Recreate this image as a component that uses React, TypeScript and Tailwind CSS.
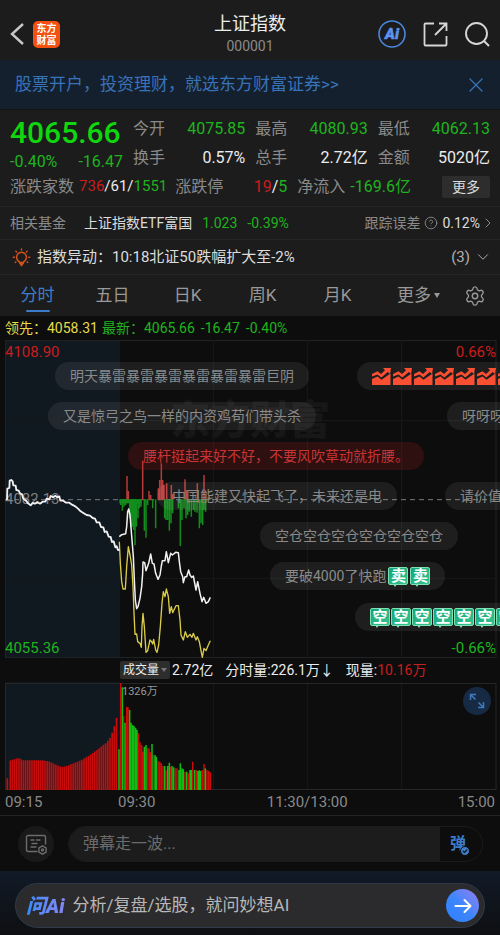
import { ChevronDown, ChevronRight, CircleHelp, Settings, X } from "lucide-react";
import clsx from "clsx";

type Point = [number, number];

const stats = [
  { label: "今开", value: "4075.85", down: true },
  { label: "最高", value: "4080.93", down: true },
  { label: "最低", value: "4062.13", down: true },
  { label: "换手", value: "0.57%", down: false },
  { label: "总手", value: "2.72亿", down: false },
  { label: "金额", value: "5020亿", down: false },
];

const periods = ["分时", "五日", "日K", "周K", "月K"];

// Chart units are a third of a pixel at the base width of 500px.
const preMarket: Point[] = [
  [21, 180], [22, 146], [28, 144], [29, 122], [34, 120], [38, 124], [40, 136], [47, 137], [49, 150], [56, 152],
  [60, 160], [66, 163], [70, 176], [78, 182], [84, 190], [92, 196], [98, 189], [105, 191], [112, 186], [120, 191],
  [128, 185], [136, 185], [140, 176], [148, 178], [152, 168], [160, 172], [166, 167], [172, 172], [178, 169],
  [181, 182], [190, 182], [198, 188], [208, 188], [216, 194], [226, 199], [234, 206], [242, 214], [250, 219],
  [260, 225], [270, 227], [278, 234], [285, 236], [290, 247], [298, 247], [303, 261], [310, 262], [314, 276],
  [320, 274], [326, 290], [332, 291], [336, 306], [341, 304], [346, 322], [350, 319], [354, 330], [358, 330],
];

const indexLine: Point[] = [
  [358, 290], [365, 284], [377, 281], [380, 260], [383, 215], [386, 207], [390, 225], [396, 300], [400, 350],
  [403, 420], [406, 480], [410, 506], [414, 500], [420, 475], [425, 440], [428, 400], [429, 366], [434, 368],
  [438, 392], [446, 370], [452, 342], [457, 370], [462, 372], [467, 400], [474, 418], [480, 405], [484, 378],
  [487, 362], [495, 362], [499, 335], [505, 368], [512, 340], [517, 345], [527, 337], [535, 338], [538, 365],
  [542, 395], [548, 410], [550, 428], [555, 410], [560, 410], [566, 390], [570, 405], [575, 412], [580, 408],
  [588, 450], [593, 425], [600, 460], [606, 485], [611, 472], [618, 490], [625, 485], [631, 472],
];

const leadLine: Point[] = [
  [358, 305], [361, 370], [365, 425], [369, 447], [376, 447], [380, 380], [385, 320], [390, 345], [395, 375],
  [399, 440], [402, 520], [405, 583], [410, 582], [413, 605], [420, 610], [424, 622], [426, 560], [429, 520],
  [433, 560], [438, 637], [443, 632], [450, 600], [455, 605], [458, 612], [461, 598], [467, 630], [471, 637],
  [476, 615], [481, 560], [486, 490], [490, 455], [495, 470], [499, 447], [505, 470], [509, 520], [514, 500],
  [518, 518], [528, 497], [535, 497], [540, 540], [543, 585], [550, 600], [556, 575], [562, 592], [570, 583],
  [576, 592], [580, 580], [588, 600], [592, 590], [598, 605], [603, 632], [607, 652], [612, 625], [618, 632],
  [625, 615], [631, 602],
];

const flowUp: Point[] = [
  [381, 108], [385, 153], [428, 62], [447, 153], [452, 165], [475, 145], [479, 120], [484, 70], [488, 120],
  [492, 135], [500, 130], [514, 135], [518, 162], [555, 118], [559, 150], [592, 130], [612, 105], [628, 165],
];

const flowDown: Point[] = [
  [362, 195], [367, 212], [372, 200], [377, 195], [389, 235], [393, 265], [397, 260], [401, 270], [405, 316],
  [409, 260], [414, 235], [418, 205], [423, 200], [433, 272], [438, 293], [443, 195], [458, 205], [467, 265],
  [494, 235], [498, 240], [503, 240], [508, 272], [513, 250], [518, 220], [535, 205], [541, 318], [546, 240],
  [552, 205], [558, 235], [563, 225], [568, 215], [574, 230], [580, 210], [585, 215], [591, 218], [598, 265],
  [603, 250], [608, 255], [612, 210], [617, 215],
];

const auctionEnvelope: Point[] = [
  [28, 318], [40, 313], [55, 309], [70, 316], [130, 316], [150, 320], [165, 328], [185, 336], [200, 333],
  [220, 325], [240, 317], [260, 306], [280, 293], [300, 278], [320, 262], [330, 248], [340, 225], [348, 195],
  [356, 157],
];

const volumes: [number, number, "r" | "g"][] = [
  [357, 283, "g"], [362, 84, "r"], [367, 97, "g"], [371, 182, "r"], [375, 203, "g"], [380, 155, "r"],
  [384, 157, "r"], [389, 165, "g"], [393, 203, "g"], [398, 210, "g"], [402, 213, "g"], [407, 218, "g"],
  [411, 225, "g"], [415, 235, "r"], [420, 262, "r"], [425, 270, "r"], [429, 290, "r"], [433, 275, "g"],
  [438, 270, "g"], [442, 280, "r"], [447, 280, "r"], [451, 292, "r"], [456, 267, "g"], [460, 300, "r"],
  [465, 300, "g"], [469, 305, "g"], [474, 318, "r"], [479, 320, "r"], [484, 324, "r"], [489, 333, "r"],
  [494, 333, "g"], [498, 345, "r"], [503, 333, "g"], [508, 323, "g"], [512, 335, "r"], [516, 333, "g"],
  [521, 337, "g"], [526, 340, "r"], [531, 340, "r"], [537, 345, "g"], [541, 325, "g"], [546, 340, "g"],
  [550, 343, "g"], [555, 350, "r"], [560, 350, "g"], [565, 355, "r"], [570, 345, "g"], [574, 345, "g"],
  [578, 320, "r"], [584, 345, "g"], [589, 345, "r"], [594, 348, "g"], [598, 346, "g"], [602, 348, "g"],
  [607, 345, "r"], [612, 327, "r"], [616, 340, "g"], [621, 345, "r"], [626, 347, "r"], [631, 352, "r"],
];

const toPath = (points: Point[]) => "M" + points.map((p) => p.join(" ")).join("L");

const barsPath = (bars: Point[], base: number) =>
  bars.map(([x, y]) => `M${x} ${base}V${y}`).join("");

function envelopeAt(x: number) {
  const i = auctionEnvelope.findIndex(([px]) => px >= x);
  if (i <= 0) return auctionEnvelope[0][1];
  const [x0, y0] = auctionEnvelope[i - 1];
  const [x1, y1] = auctionEnvelope[i];
  return y0 + ((y1 - y0) * (x - x0)) / (x1 - x0);
}

const auctionBars: Point[] = [[22, 370]];
for (let x = 31; x < 356; x += 6.5) auctionBars.push([x, envelopeAt(x)]);

function BrandLogo() {
  return (
    <svg width="27" height="27" viewBox="0 0 27 27" role="img" aria-label="东方财富">
      <rect width="27" height="27" rx="5" fill="#f4500f" />
      <g
        fill="#fff"
        fontFamily="'Noto Sans CJK SC', sans-serif"
        fontSize="10"
        fontWeight="700"
        textAnchor="middle"
      >
        <text x="13.5" y="11">东方</text>
        <text x="13.5" y="23">财富</text>
      </g>
    </svg>
  );
}

function AiBadge() {
  return (
    <svg width="28" height="28" viewBox="0 0 28 28">
      <circle cx="14" cy="14" r="13" fill="none" stroke="#4a86dc" strokeWidth="1.6" />
      <text
        x="14"
        y="19"
        fill="#5b93f0"
        stroke="#5b93f0"
        strokeWidth="0.5"
        fontFamily="Roboto, sans-serif"
        fontSize="15"
        fontWeight="900"
        fontStyle="italic"
        textAnchor="middle"
      >
        Ai
      </text>
    </svg>
  );
}

function BulbIcon() {
  return (
    <svg width="19" height="19" viewBox="0 0 19 19" fill="none" stroke="#d2521c" strokeWidth="1.5" strokeLinecap="round">
      <path d="M7.3 13.6a4.9 4.9 0 1 1 4.4 0c-.3 1.2-1 2.4-2.2 3.6-1.2-1.2-1.9-2.4-2.200-3.600Z" />
      <path d="M7.6 14.4h3.800l-1.900 3Z" fill="#d2521c" />
      <path d="M9.5 1v1M3.900 3.300l.7.7M15.100 3.300l-.7.7M1.300 9.300h1M16.700 9.300h1M3.300 14.400l.5-.4M15.700 14.400l-.5-.4" />
    </svg>
  );
}

function TrendEmoji() {
  return (
    <svg width="19" height="18" viewBox="0 0 19 18" className="shrink-0" fill="#fb4f33">
      <path d="M0 7 5.500 4.200 9 7 13 3.200 11 1H19L18 7 15.800 5 9.300 10.500 5.500 7.500 0 9.500Z" />
      <path d="M0 12 5.500 9.500 9.500 12.800 18.500 6.500V18H0Z" />
    </svg>
  );
}

function WordEmoji({ word }: { word: string }) {
  return (
    <span className="relative flex h-[18px] w-5 shrink-0 items-center justify-center rounded-[2px] border border-[#7fe0b4] bg-linear-to-br from-[#12a578] to-[#35c48f] text-[15px] leading-none font-bold text-white after:absolute after:-bottom-[3px] after:left-1 after:border-x-2 after:border-t-3 after:border-x-transparent after:border-t-[#7fe0b4]">
      {word}
    </span>
  );
}

function Bullet({ className, hot, children }: { className: string; hot?: boolean; children: React.ReactNode }) {
  return (
    <div
      className={clsx(
        "absolute flex h-7 items-center rounded-full px-[15px] text-sm whitespace-nowrap",
        hot ? "bg-[#b41e1e]/20 text-[#c93434]" : "bg-white/7 text-[#8a8a8a]",
        className,
      )}
    >
      {children}
    </div>
  );
}

function Header() {
  return (
    <header className="grid h-15 grid-cols-[1fr_auto_1fr] items-center bg-[#1c1c1c] pr-2.5 pl-2.5">
      <div className="flex items-center gap-2 pt-2">
        <button type="button" aria-label="返回">
          <svg width="15" height="22" viewBox="0 0 15 22" fill="none" stroke="#c8c8c8" strokeWidth="2.4">
            <path d="M13 1 2 11l11 10" />
          </svg>
        </button>
        <BrandLogo />
      </div>
      <div className="flex flex-col items-center pt-2">
        <h1 className="text-lg leading-6 text-[#ececec]">上证指数</h1>
        <span className="text-sm leading-5 text-[#8a8a8a]">000001</span>
      </div>
      <div className="flex items-center justify-end gap-4 pt-2">
        <button type="button" aria-label="Ai">
          <AiBadge />
        </button>
        <button type="button" aria-label="分享">
          <svg width="26" height="26" viewBox="0 0 26 26" fill="none" stroke="#d6d6d6" strokeWidth="1.8">
            <path d="M12 2.500H3.500a1 1 0 0 0-1 1v20a1 1 0 0 0 1 1h20a1 1 0 0 0 1-1V15M17 2.500h7.500V10M24.500 2.500 13 14" />
          </svg>
        </button>
        <button type="button" aria-label="搜索">
          <svg width="26" height="26" viewBox="0 0 26 26" fill="none" stroke="#d6d6d6" strokeWidth="1.9">
            <circle cx="12.5" cy="12.5" r="10.5" />
            <path d="m20 20 5 5" />
          </svg>
        </button>
      </div>
    </header>
  );
}

function Quote() {
  return (
    <section className="bg-[#1c1c1c] px-2.5 pt-1 pb-[5px] text-base">
      <div className="grid grid-cols-[113px_1fr] gap-2.5">
        <div>
          <div className="text-[30px] leading-[38px] font-medium text-[#0fd60f]">4065.66</div>
          <div className="flex justify-between leading-5 text-[#1fb41f]">
            <span>-0.40%</span>
            <span>-16.47</span>
          </div>
        </div>
        <dl className="grid grid-cols-3 gap-x-2.5">
          {stats.map((s) => (
            <div key={s.label} className="flex justify-between leading-[29px]">
              <dt className="text-[#8a8a8a]">{s.label}</dt>
              <dd className={s.down ? "text-[#1fb41f]" : "text-[#ececec]"}>{s.value}</dd>
            </div>
          ))}
        </dl>
      </div>
      <div className="flex h-[29px] items-center text-[#8a8a8a]">
        <span>涨跌家数</span>
        <span className="ml-[5px] text-[15px] text-[#ececec]">
          <span className="text-[#c81e1e]">736</span>/61/<span className="text-[#1fb41f]">1551</span>
        </span>
        <div className="ml-2 flex w-28 justify-between">
          <span>涨跌停</span>
          <span className="text-[#ececec]">
            <span className="text-[#c81e1e]">19</span>/<span className="text-[#1fb41f]">5</span>
          </span>
        </div>
        <span className="ml-2.5">净流入</span>
        <span className="ml-[5px] text-[#1fb41f]">-169.6亿</span>
        <button type="button" className="ml-auto h-[22px] w-12 rounded-[2px] bg-[#2d2d2d] text-sm text-[#dcdcdc]">
          更多
        </button>
      </div>
    </section>
  );
}

function PriceChart() {
  return (
    <section className="relative h-[318px] overflow-hidden text-[15px] leading-5">
      <svg className="absolute inset-0 h-full w-full" viewBox="0 0 1500 954" preserveAspectRatio="none" fill="none">
        <rect x="15" y="0" width="345" height="954" fill="#101820" />
        <g stroke="#202224">
          <path vectorEffect="non-scaling-stroke" d="M15 1.500H1488M15 952.500H1488M16.500 0V954M1488 0V954" />
        </g>
        <g stroke="#17191b">
          <path vectorEffect="non-scaling-stroke" d="M190 0V954M640 0V954M922 0V954M1205 0V954M15 242H1488M15 715H1488" />
        </g>
      </svg>
      <div className="absolute inset-x-0 top-13 text-center text-[40px] leading-[58px] font-black text-[#171717]">
        东方财富
      </div>
      <span className="absolute top-[149px] left-[5px] text-[#808080]">4082.13</span>
      <svg className="absolute inset-0 h-full w-full" viewBox="0 0 1500 954" preserveAspectRatio="none" fill="none">
        <g transform="translate(0 300)">
          <path d="M15 179H1488" stroke="#7a7a7a" strokeDasharray="5 4" vectorEffect="non-scaling-stroke" />
          <path d={barsPath(flowUp, 180)} stroke="#b83a3a" strokeWidth="4.5" />
          <path d={barsPath(flowDown, 178)} stroke="#128c1c" strokeWidth="4.5" />
          <path d="M358 184H424" stroke="#128c1c" strokeWidth="12" />
          <path d={toPath(leadLine)} stroke="#d8cc4a" strokeWidth="4" strokeLinejoin="round" />
          <path d={toPath(preMarket)} stroke="#f2f2f2" strokeWidth="5.5" strokeLinejoin="round" />
          <path d={toPath(indexLine)} stroke="#f2f2f2" strokeWidth="4.5" strokeLinejoin="round" />
        </g>
      </svg>
      <span className="absolute top-0.5 left-[5px] text-[#c81e1e]">4108.90</span>
      <span className="absolute top-0.5 right-1 text-[#c81e1e]">0.66%</span>
      <span className="absolute bottom-0 left-[5px] text-[#1fb41f]">4055.36</span>
      <span className="absolute right-1 bottom-0 text-[#1fb41f]">-0.66%</span>

      {/* Scrolling comments */}
      <Bullet className="top-[22px] left-[55px]">明天暴雷暴雷暴雷暴雷暴雷暴雷巨阴</Bullet>
      <Bullet className="top-[22px] left-[357px] gap-0.5">
        {[0, 1, 2, 3, 4, 5, 6].map((i) => (
          <TrendEmoji key={i} />
        ))}
      </Bullet>
      <Bullet className="top-[62px] left-12">又是惊弓之鸟一样的内资鸡苟们带头杀</Bullet>
      <Bullet className="top-[62px] left-[447px]">呀呀呀</Bullet>
      <Bullet hot className="top-[102px] left-32">腰杆挺起来好不好，不要风吹草动就折腰。</Bullet>
      <Bullet className="top-[142px] left-[157px]">中国能建又快起飞了，未来还是电</Bullet>
      <Bullet className="top-[142px] left-[445px]">请价值</Bullet>
      <Bullet className="top-[182px] left-[260px]">空仓空仓空仓空仓空仓空仓</Bullet>
      <Bullet className="top-[222px] left-[270px] gap-0.5">
        要破4000了快跑
        <WordEmoji word="卖" />
        <WordEmoji word="卖" />
      </Bullet>
      <Bullet className="top-[263px] left-[355px] gap-px">
        {[0, 1, 2, 3, 4, 5, 6].map((i) => (
          <WordEmoji key={i} word="空" />
        ))}
      </Bullet>
    </section>
  );
}

function VolumeChart() {
  const red = volumes.filter((v) => v[2] === "r").map(([x, y]): Point => [x, y]);
  const green = volumes.filter((v) => v[2] === "g").map(([x, y]): Point => [x, y]);

  return (
    <section>
      <div className="flex h-6 items-center pl-[120px] text-sm text-[#ececec]">
        <button type="button" className="flex h-[18px] w-[50px] items-center justify-between rounded-[2px] bg-[#2d2d2d] px-[3px] text-xs">
          成交量
          <span className="border-x-3 border-t-4 border-x-transparent border-t-[#777]" />
        </button>
        <span className="ml-0.5">2.72亿</span>
        <span className="ml-3">分时量:226.1万↓</span>
        <span className="ml-3">
          现量:<span className="text-[#c81e1e]">10.16万</span>
        </span>
      </div>
      <div className="relative h-[108px]">
        <svg className="h-full w-full" viewBox="0 0 1500 324" preserveAspectRatio="none" fill="none">
          <rect x="15" y="0" width="345" height="324" fill="#101820" />
          <path vectorEffect="non-scaling-stroke" stroke="#17191b" d="M190 0V324M640 0V324M922 0V324M1205 0V324" />
          <path vectorEffect="non-scaling-stroke" stroke="#242628" d="M15 4.500H1488M15 322.500H1488M16.500 4V324M1488 4V324" />
          <g transform="translate(0 -81)">
            <path d={barsPath(auctionBars, 405)} stroke="#c80c0c" strokeWidth="5" />
            <path d={barsPath(red, 405)} stroke="#cc0a0a" strokeWidth="4.5" />
            <path d={barsPath(green, 405)} stroke="#12bc12" strokeWidth="4.5" />
          </g>
        </svg>
        <span className="absolute top-0.5 left-[122px] text-[11px] leading-4 text-[#999]">1326万</span>
        <button
          type="button"
          aria-label="全屏"
          className="absolute top-[5px] right-[9px] flex size-7 items-center justify-center rounded-full bg-[#172a44]"
        >
          <svg width="16" height="16" viewBox="0 0 16 16" fill="none" stroke="#3f79bd" strokeWidth="1.5">
            <path d="M1.500 7V1.500H7M1.500 1.500 6.500 6.500M14.500 9v5.500H9M14.500 14.500 9.500 9.500" />
          </svg>
        </button>
      </div>
      <div className="grid h-[25px] grid-cols-[113px_1fr_auto] items-center pr-[5px] pl-[5px] text-[15px] text-[#8a8a8a]">
        <span>09:15</span>
        <div className="flex justify-between">
          <span>09:30</span>
          <span className="mr-[110px]">11:30/13:00</span>
        </div>
        <span>15:00</span>
      </div>
    </section>
  );
}

export default function App() {
  return (
    <main className="bg-[#0d0d0d] font-[Roboto,'Noto_Sans_CJK_SC',sans-serif]">
      <Header />

      <div className="flex h-[50px] items-center justify-between border-b border-[#141414] bg-[#15202e] pr-3 pl-[15px]">
        <a href="#open" className="text-[17px] text-[#3872b8]">
          股票开户，投资理财，就选东方财富证券&gt;&gt;
        </a>
        <button type="button" aria-label="关闭">
          <X size={24} strokeWidth={1.3} className="text-[#3872b8]" />
        </button>
      </div>

      <Quote />

      <div className="flex h-[33px] items-center border-t border-[#262626] bg-[#1c1c1c] pr-2 pl-2.5 text-sm">
        <span className="text-[#8a8a8a]">相关基金</span>
        <a href="#fund" className="ml-[18px] flex gap-2.5 text-[#dcdcdc]">
          上证指数ETF富国
          <span className="text-[#1fb41f]">1.023</span>
          <span className="text-[#1fb41f]">-0.39%</span>
        </a>
        <span className="ml-auto text-[#8a8a8a]">跟踪误差</span>
        <CircleHelp size={14} strokeWidth={1.5} className="ml-1 text-[#8a8a8a]" />
        <span className="ml-1 text-[#dcdcdc]">0.12%</span>
        <ChevronRight size={16} strokeWidth={1.5} className="-mr-1 text-[#8a8a8a]" />
      </div>

      <div className="flex h-[35px] items-center border-t border-[#262626] bg-[#1c1c1c] pr-2 pl-3 text-[15px] text-[#dcdcdc]">
        <BulbIcon />
        <span className="ml-1.5">指数异动：10:18北证50跌幅扩大至-2%</span>
        <button type="button" className="ml-auto flex items-center gap-1 text-[#b0b0b0]">
          (3)
          <ChevronDown size={18} strokeWidth={1.3} />
        </button>
      </div>

      <nav className="grid h-[42px] grid-cols-[repeat(6,75fr)_50fr] border-t border-[#262626] bg-[#1c1c1c] text-[17px] text-[#999]">
        {periods.map((name, i) => (
          <button
            key={name}
            type="button"
            className={clsx("relative", i === 0 && "text-[#3d7cc9]")}
          >
            {name}
            {i === 0 && (
              <span className="absolute bottom-1 left-1/2 h-0.5 w-6 -translate-x-1/2 rounded-full bg-[#3d7cc9]" />
            )}
          </button>
        ))}
        <button type="button" className="flex items-center justify-center gap-[3px] pl-3">
          更多
          <span className="border-x-3 border-t-5 border-x-transparent border-t-[#999]" />
        </button>
        <button type="button" aria-label="设置" className="flex items-center justify-center">
          <Settings size={22} strokeWidth={1.5} />
        </button>
      </nav>

      <div className="flex h-6 items-center pl-[5px] text-sm text-[#1fb41f]">
        <span className="text-[#e6dc4b]">领先：4058.31</span>
        <span className="ml-1">最新：4065.66</span>
        <span className="ml-1.5">-16.47</span>
        <span className="ml-1.5">-0.40%</span>
      </div>

      <PriceChart />
      <VolumeChart />

      <div className="flex h-14 items-center gap-3.5 border-t border-[#222] pr-[17px] pl-[18px]">
        <button type="button" aria-label="弹幕设置" className="flex size-9 shrink-0 items-center justify-center rounded-full bg-[#191919]">
          <svg width="22" height="22" viewBox="0 0 22 22" fill="none" stroke="#6c6c6c" strokeWidth="1.4" strokeLinecap="round">
            <path d="M12 18.500H3A1.500 1.500 0 0 1 1.500 17V4A1.500 1.500 0 0 1 3 2.500h16A1.500 1.500 0 0 1 20.500 4v7M6 7h3M11.500 7H15M7 10.500h5M6 14h5" />
            <path d="m17.500 12.800 3.600 2.100v4.200l-3.600 2.100-3.600-2.100v-4.200Z" />
            <circle cx="17.5" cy="17" r="1" />
          </svg>
        </button>
        <div className="flex h-9 flex-1 overflow-hidden rounded-full border border-[#1c1c1c]">
          <input
            type="text"
            aria-label="弹幕"
            placeholder="弹幕走一波..."
            className="min-w-0 flex-1 bg-[#1c1c1c] pl-3.5 text-base outline-none placeholder:text-[#6c6c6c]"
          />
          <button type="button" aria-label="弹幕开关" className="flex w-[42px] items-center pl-2.5">
            <span className="relative text-base leading-none font-bold text-[#3d7cc9]">
              弹
              <svg className="absolute -right-1 -bottom-1" width="10" height="10" viewBox="0 0 10 10">
                <circle cx="5" cy="5" r="4.5" fill="#3d7cc9" stroke="#0d0d0d" />
                <path d="m3 5 1.500 1.500L7.200 3.700" fill="none" stroke="#0d0d0d" strokeWidth="1.2" />
              </svg>
            </span>
          </button>
        </div>
      </div>

      <div className="h-16 bg-linear-to-b from-[#111a27] to-[#0e0f12] px-[15px] pt-3">
        <div className="flex h-[45px] items-center rounded-full border border-[#2c3a4a] bg-[#2b2b2d] pr-[5px] pl-2.5">
          <span className="bg-linear-to-r from-[#2f8bff] to-[#8a86f0] bg-clip-text pr-1 text-xl leading-6 font-black text-transparent italic">
            问Ai
          </span>
          <input
            type="text"
            aria-label="问Ai"
            placeholder="分析/复盘/选股，就问妙想AI"
            className="ml-1 min-w-0 flex-1 bg-transparent text-[17px] outline-none placeholder:text-[#b8b8b8]"
          />
          <button
            type="button"
            aria-label="发送"
            className="flex size-[33px] items-center justify-center rounded-full bg-linear-to-bl from-[#8d7df0] via-[#3f86fb] to-[#2a7fff]"
          >
            <svg width="18" height="18" viewBox="0 0 18 18" fill="none" stroke="#fff" strokeWidth="2" strokeLinecap="round" strokeLinejoin="round">
              <path d="M1.500 9h15M10.500 3l6 6-6 6" />
            </svg>
          </button>
        </div>
      </div>
    </main>
  );
}
